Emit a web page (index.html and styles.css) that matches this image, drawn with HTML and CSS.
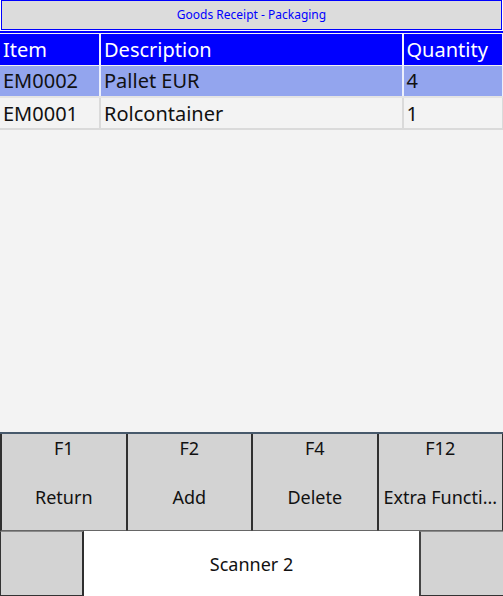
FILE: index.html
```html
<!DOCTYPE html>
<html lang="en">
<head>
    <meta charset="UTF-8">
    <title>Goods Receipt - Packaging</title>
    <link rel="stylesheet" href="styles.css">
</head>
<body>
    <div id="screen">
        <div class="title">Goods Receipt - Packaging</div>

        <div class="listBox">
            <table class="grid">
                <thead>
                    <tr>
                        <th class="colItem">Item</th>
                        <th class="colDesc">Description</th>
                        <th class="colQty">Quantity</th>
                    </tr>
                </thead>
                <tbody>
                    <tr class="selected">
                        <td>EM0002</td>
                        <td>Pallet EUR</td>
                        <td>4</td>
                    </tr>
                    <tr>
                        <td>EM0001</td>
                        <td>Rolcontainer</td>
                        <td>1</td>
                    </tr>
                </tbody>
            </table>
        </div>

        <!-- function keys -->
        <div class="keys">
            <div class="key"><span class="fkey">F1</span><span class="label">Return</span></div>
            <div class="key"><span class="fkey">F2</span><span class="label">Add</span></div>
            <div class="key"><span class="fkey">F4</span><span class="label">Delete</span></div>
            <div class="key"><span class="fkey">F12</span><span class="label">Extra Functi...</span></div>
        </div>

        <div class="status">
            <div class="sideBox left"></div>
            <div class="scanner">Scanner 2</div>
            <div class="sideBox right"></div>
        </div>
    </div>
</body>
</html>
```
FILE: styles.css
```css
* {
    margin: 0;
    padding: 0;
    box-sizing: border-box;
}

body {
    background-color: #ffffff;
    font-family: "Noto Sans", "Open Sans", sans-serif;
}

#screen {
    width: 503px;
    height: 596px;
    display: flex;
    flex-direction: column;
}

.title {
    flex: none;
    height: 30px;
    margin: 0 1px;
    border: 1px solid #0000ff;
    background-color: #dcdcdc;
    color: #0000ff;
    font-size: 12px;
    line-height: 28px;
    text-align: center;
}

.listBox {
    flex: 1;
    margin-top: 1px;
    border-top: 2px solid #0000ff;
    padding-top: 1px;
    background-color: #f3f3f3;
    border-bottom: 2px solid #47596b;
}

.grid {
    width: 100%;
    border-collapse: collapse;
    table-layout: fixed;
    font-size: 20px;
}

.grid th,
.grid td {
    height: 32px;
    padding: 0 0 0 3px;
    text-align: left;
    font-weight: normal;
    white-space: nowrap;
    overflow: hidden;
}

.grid th {
    height: 31px;
    background-color: #0000ff;
    color: #ffffff;
    border-right: 2px solid #f0f0ff;
    border-bottom: 1px solid #f0f0f0;
}

.grid td {
    color: #111111;
    border-right: 2px solid #dadada;
    border-bottom: 2px solid #dadada;
}

.grid tr.selected td {
    background-color: #93a5ee;
    border-right-color: #ecf0fc;
    border-bottom-color: #e4e4e4;
}

.colItem {
    width: 100px;
}

.colQty {
    width: 100px;
}

.grid th:last-child,
.grid td:last-child {
    border-right-width: 1px;
}

.keys {
    flex: none;
    height: 97px;
    display: flex;
    background-color: #d3d3d3;
}

.key {
    flex: 1;
    min-width: 0;
    display: flex;
    flex-direction: column;
    align-items: center;
    border-left: 1px solid #2f2f2f;
    border-right: 1px solid #2f2f2f;
    border-bottom: 1px solid #666;
    color: #111111;
    font-size: 18px;
}

.key:first-child {
    border-left: 2px solid #2f2f2f;
}

.fkey {
    margin-top: 1px;
    line-height: 26px;
}

.label {
    margin-top: 23px;
    line-height: 26px;
    white-space: nowrap;
}

.status {
    flex: none;
    height: 65px;
    display: flex;
}

.sideBox {
    width: 84px;
    background-color: #d3d3d3;
    border-top: 1px solid #8a8a8a;
}

.sideBox.left {
    border-left: 1px solid #333;
    border-right: 2px solid #2f2f2f;
    border-bottom: 1px solid #333;
}

.sideBox.right {
    border-left: 2px solid #444;
    border-bottom: 1px solid #333;
}

.scanner {
    flex: 1;
    text-align: center;
    font-size: 18px;
    line-height: 66px;
    color: #111111;
}
```
